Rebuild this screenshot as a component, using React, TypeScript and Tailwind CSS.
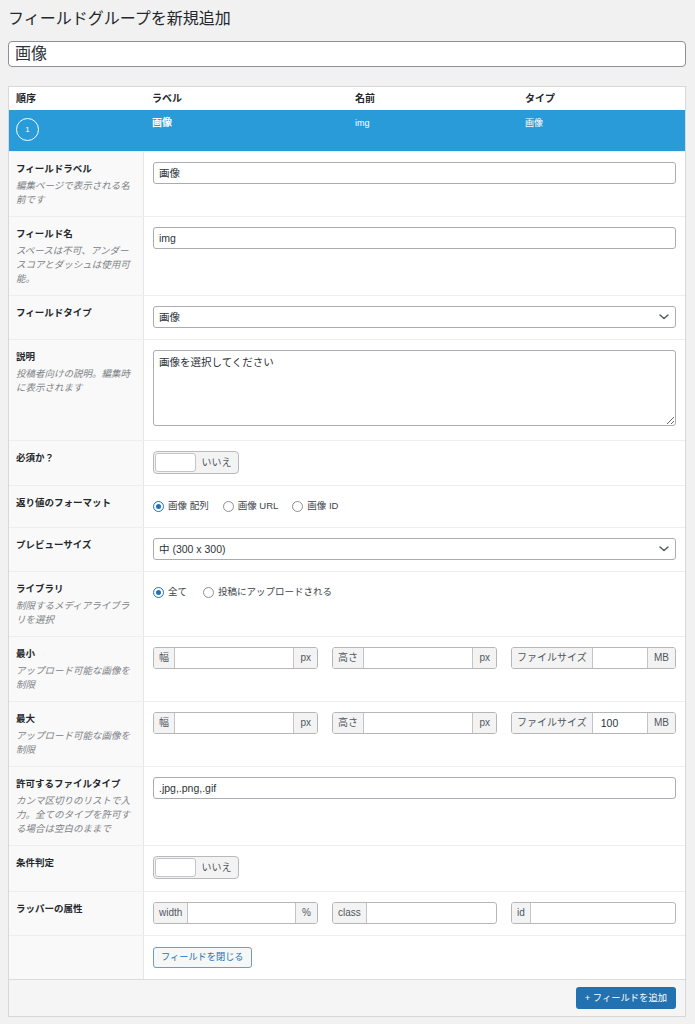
import React from "react";

const FONT = "font-['Liberation_Sans','Noto_Sans_CJK_JP',sans-serif]";

function TextInput({ value }: { value?: string }) {
  return (
    <div className="h-[22px] w-full rounded-[3px] border border-[#a9acb0] bg-white pl-[5px] text-[10.5px] leading-[20px] text-[#2c3338]">
      {value}
    </div>
  );
}

function Select({ value }: { value: string }) {
  return (
    <div className="flex h-[22px] w-full items-center justify-between rounded-[3px] border border-[#a9acb0] bg-white pl-[5px] pr-[6px] text-[10.5px] leading-[20px] text-[#2c3338]">
      <span>{value}</span>
      <svg width="10" height="6" viewBox="0 0 10 6" fill="none">
        <path d="M1 1l4 3.6L9 1" stroke="#50575e" strokeWidth="1.4" strokeLinecap="round" strokeLinejoin="round" />
      </svg>
    </div>
  );
}

function Toggle() {
  return (
    <div className="flex h-[23px] w-[86px] items-center rounded-[4px] border border-[#b8b9bb] bg-[#f3f3f3] p-[1px]">
      <div className="h-[19px] w-[41px] rounded-[3px] border border-[#c3c4c7] bg-white" />
      <span className="flex-1 text-center text-[10px] leading-[19px] text-[#50575e]">いいえ</span>
    </div>
  );
}

function Radio({ checked, label }: { checked?: boolean; label: string }) {
  return (
    <div className="flex items-center gap-[4px]">
      <span
        className={
          checked
            ? "flex h-[11px] w-[11px] items-center justify-center rounded-full border border-[#2271b1] bg-white"
            : "flex h-[11px] w-[11px] items-center justify-center rounded-full border border-[#8c8f94] bg-white"
        }
      >
        {checked && <span className="h-[5px] w-[5px] rounded-full bg-[#2271b1]" />}
      </span>
      <span className="text-[9.5px] leading-[20px] text-[#3c434a]">{label}</span>
    </div>
  );
}

function Group({ pre, post, value }: { pre: string; post?: string; value?: string }) {
  return (
    <div className="flex h-[22px] overflow-hidden rounded-[3px] border border-[#b4b7ba] bg-white text-[10px] leading-[20px]">
      <div className="border-r border-[#c3c4c7] bg-[#f3f3f3] px-[5px] text-[#50575e]">{pre}</div>
      <div className="flex-1 pl-[8px] text-[10.5px] text-[#2c3338]">{value}</div>
      {post && <div className="border-l border-[#c3c4c7] bg-[#f3f3f3] px-[6px] text-[#50575e]">{post}</div>}
    </div>
  );
}

function Row({
  label,
  desc,
  children,
  contentClass = "pt-[10px] pb-[11px]",
}: {
  label?: string;
  desc?: string[];
  children?: React.ReactNode;
  contentClass?: string;
}) {
  return (
    <div className="flex border-t border-[#eeeeee]">
      <div className="w-[135px] shrink-0 border-r border-[#e6e6e6] bg-[#f9f9f9] pl-[7px] pr-[6px] pt-[10px] pb-[9px]">
        {label && <div className="text-[9.5px] font-bold leading-[14px] text-[#23282d]">{label}</div>}
        {desc && (
          <div className="mt-[3px] text-[9.5px] italic leading-[14px] text-[#7e8387]">
            {desc.map((d, i) => (
              <div key={i}>{d}</div>
            ))}
          </div>
        )}
      </div>
      <div className={"flex-1 px-[9px] " + contentClass}>{children}</div>
    </div>
  );
}

export default function App() {
  return (
    <div className={"min-h-[1024px] w-full bg-[#f1f1f1] pt-[8px] " + FONT}>
      <h1 className="pl-[8px] text-[16px] font-normal leading-[22px] text-[#23282d]">フィールドグループを新規追加</h1>
      <div className="mx-[8px] mt-[11px] h-[26px] w-[678px] rounded-[4px] border border-[#8c8f94] bg-white pl-[6px] text-[16px] leading-[24px] text-[#2c3338]">
        画像
      </div>

      <div className="ml-[8px] mt-[19px] w-[678px] border border-[#d8d8d8] bg-white">
        {/* header */}
        <div className="flex h-[23px] items-center pl-[7px] text-[10px] font-bold text-[#23282d]">
          <div className="w-[136px]">順序</div>
          <div className="w-[203px]">ラベル</div>
          <div className="w-[170px]">名前</div>
          <div className="flex-1">タイプ</div>
        </div>
        {/* active field row */}
        <div className="flex h-[41px] bg-[#2a9bd9] pl-[7px] text-[10px] leading-[12px] text-white">
          <div className="w-[136px] pt-[8px]">
            <div className="flex h-[23px] w-[23px] items-center justify-center rounded-full border border-white text-[8px] leading-none">
              1
            </div>
          </div>
          <div className="w-[203px] pt-[7px] font-bold">画像</div>
          <div className="w-[170px] pt-[7px] text-[9px]">img</div>
          <div className="flex-1 pt-[7px] text-[9px]">画像</div>
        </div>

        <Row label="フィールドラベル" desc={["編集ページで表示される名", "前です"]}>
          <TextInput value="画像" />
        </Row>
        <Row label="フィールド名" desc={["スペースは不可、アンダー", "スコアとダッシュは使用可", "能。"]}>
          <TextInput value="img" />
        </Row>
        <Row label="フィールドタイプ">
          <Select value="画像" />
        </Row>
        <Row label="説明" desc={["投稿者向けの説明。編集時", "に表示されます"]} contentClass="pt-[10px] pb-[14px]">
          <textarea
            readOnly
            defaultValue="画像を選択してください"
            className="block h-[76px] w-full rounded-[3px] border border-[#a9acb0] bg-white px-[5px] pt-[3px] text-[10.5px] leading-[16px] text-[#2c3338] outline-none"
          />
        </Row>
        <Row label="必須か？" contentClass="pt-[10px] pb-[11px]">
          <Toggle />
        </Row>
        <Row label="返り値のフォーマット" contentClass="pt-[10px] pb-[11px]">
          <div className="flex items-center gap-[14px]">
            <Radio checked label="画像 配列" />
            <Radio label="画像 URL" />
            <Radio label="画像 ID" />
          </div>
        </Row>
        <Row label="プレビューサイズ">
          <Select value="中 (300 x 300)" />
        </Row>
        <Row label="ライブラリ" desc={["制限するメディアライブラ", "リを選択"]} contentClass="pt-[10px] pb-[11px]">
          <div className="flex items-center gap-[16px]">
            <Radio checked label="全て" />
            <Radio label="投稿にアップロードされる" />
          </div>
        </Row>
        <Row label="最小" desc={["アップロード可能な画像を", "制限"]}>
          <div className="grid grid-cols-3 gap-x-[14px]">
            <Group pre="幅" post="px" />
            <Group pre="高さ" post="px" />
            <Group pre="ファイルサイズ" post="MB" />
          </div>
        </Row>
        <Row label="最大" desc={["アップロード可能な画像を", "制限"]}>
          <div className="grid grid-cols-3 gap-x-[14px]">
            <Group pre="幅" post="px" />
            <Group pre="高さ" post="px" />
            <Group pre="ファイルサイズ" post="MB" value="100" />
          </div>
        </Row>
        <Row
          label="許可するファイルタイプ"
          desc={["カンマ区切りのリストで入", "力。全てのタイプを許可す", "る場合は空白のままで"]}
        >
          <TextInput value=".jpg,.png,.gif" />
        </Row>
        <Row label="条件判定" contentClass="pt-[10px] pb-[12px]">
          <Toggle />
        </Row>
        <Row label="ラッパーの属性">
          <div className="grid grid-cols-3 gap-x-[14px]">
            <Group pre="width" post="%" />
            <Group pre="class" />
            <Group pre="id" />
          </div>
        </Row>
        <Row contentClass="flex items-start pt-[11px] pb-[11px]">
          <button className="block h-[21px] rounded-[3px] border border-[#6f9cc4] bg-[#f6f7f7] px-[7px] text-[9.2px] leading-[19px] text-[#2271b1]">
            フィールドを閉じる
          </button>
        </Row>

        {/* footer */}
        <div className="flex justify-end border-t border-[#dcdcde] bg-[#f5f5f5] px-[9px] py-[7px]">
          <button className="block h-[22px] rounded-[3px] bg-[#2271b1] px-[9px] text-[9.3px] leading-[22px] text-white">
            + フィールドを追加
          </button>
        </div>
      </div>
    </div>
  );
}
